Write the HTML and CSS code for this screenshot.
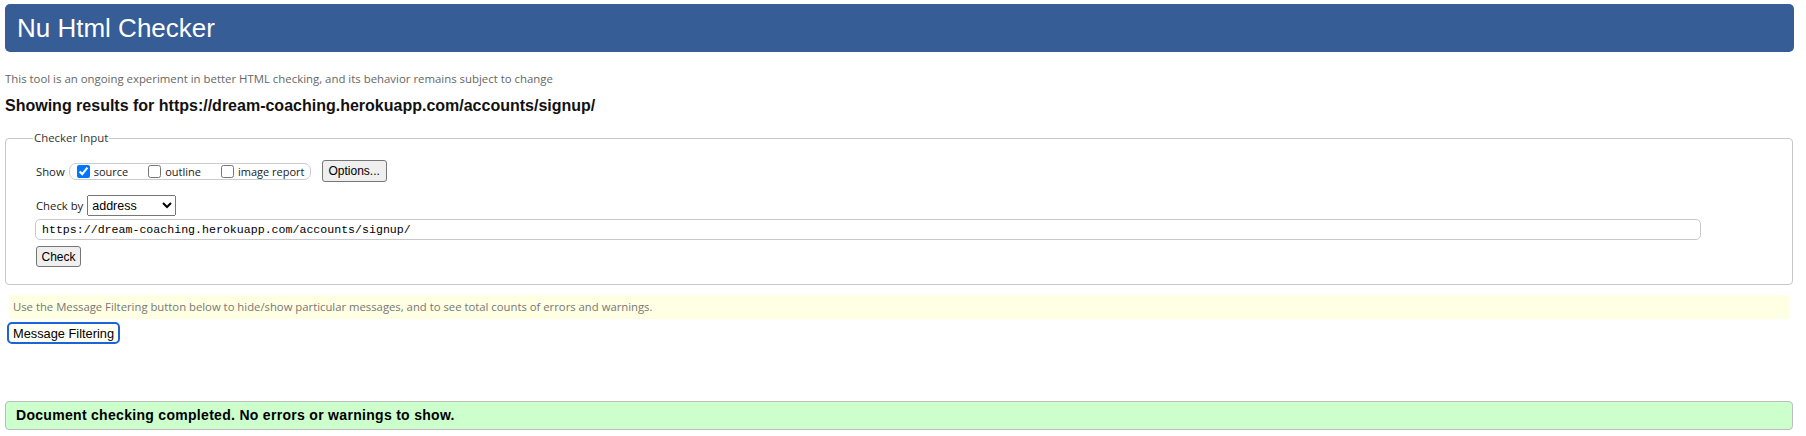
FILE: index.html
```html
<!DOCTYPE html>
<html lang="en">
<head>
<meta charset="utf-8">
<title>Showing results for https://dream-coaching.herokuapp.com/accounts/signup/ - Nu Html Checker</title>
<link rel="stylesheet" href="styles.css">
</head>
<body>
<h1 class="title">Nu Html Checker</h1>
<p class="about">This tool is an ongoing experiment in better HTML checking, and its behavior remains subject to change</p>
<h2 class="results-for">Showing results for https://dream-coaching.herokuapp.com/accounts/signup/</h2>
<form class="checker-form">
  <fieldset class="checker-input">
    <legend class="legend">Checker Input</legend>
    <div class="row show-row">
      <span class="label">Show</span>
      <span class="show-group">
        <label class="opt"><input type="checkbox" class="cb" checked>source</label>
        <label class="opt"><input type="checkbox" class="cb">outline</label>
        <label class="opt last"><input type="checkbox" class="cb">image report</label>
      </span>
      <button type="button" class="btn options">Options...</button>
    </div>
    <div class="row by-row">
      <span class="label">Check by</span>
      <select class="select"><option>address</option></select>
    </div>
    <div class="row url-row">
      <input class="url" type="text" value="https://dream-coaching.herokuapp.com/accounts/signup/">
    </div>
    <div class="row submit-row">
      <button type="button" class="btn check">Check</button>
    </div>
  </fieldset>
</form>
<p class="filter-note">Use the Message Filtering button below to hide/show particular messages, and to see total counts of errors and warnings.</p>
<button type="button" class="filter-btn">Message Filtering</button>
<p class="success">Document checking completed. No errors or warnings to show.</p>
</body>
</html>
```
FILE: styles.css
```css
html, body {
  background: #fff;
}
body {
  margin: 0;
  padding: 4px 12px 0 5px;
  font-family: "Open Sans", "Noto Sans", sans-serif;
  color: #222;
}
.title {
  margin: 0;
  height: 48px;
  line-height: 48px;
  padding: 0 12px;
  background: #365d95;
  color: #fff;
  border-radius: 5px;
  font-family: "Liberation Sans", Arial, sans-serif;
  font-weight: normal;
  font-size: 26px;
}
.about {
  margin: 20px 0 0;
  font-size: 11.4px;
  line-height: 14px;
  color: #666;
}
.results-for {
  margin: 11px 0 0;
  font-family: "Liberation Sans", Arial, sans-serif;
  font-weight: bold;
  font-size: 16px;
  line-height: 18px;
  color: #111;
}
.checker-form {
  margin: 15px 0 0;
}
.checker-input {
  margin: 0 1px 0 0;
  padding: 14px 0 17px 30px;
  border: 1px solid #c8c8c8;
  border-radius: 4px;
  min-width: 0;
}
.legend {
  margin-left: -3px;
  padding: 0 1px;
  font-size: 11.4px;
  line-height: 16px;
  color: #333;
}
.row {
  display: flex;
  align-items: center;
}
.show-row {
  height: 22px;
}
.by-row {
  margin-top: 13px;
  height: 21px;
}
.url-row {
  margin-top: 3px;
}
.submit-row {
  margin-top: 6px;
}
.label {
  font-size: 11.3px;
  color: #222;
  margin-right: 4px;
}
.show-group {
  display: flex;
  align-items: center;
  height: 15px;
  width: 233px;
  border: 1px solid #ccc;
  border-radius: 7px;
  padding: 0 0 0 7px;
  box-sizing: content-box;
}
.opt {
  display: flex;
  align-items: center;
  font-size: 11px;
  color: #222;
  margin-right: 20px;
}
.opt.last {
  margin-right: 0;
}
.cb {
  margin: 0 4px 0 0;
  width: 13px;
  height: 13px;
}
.btn {
  font-family: "Liberation Sans", Arial, sans-serif;
  font-size: 12px;
  color: #000;
  background: #efefef;
  border: 1px solid #767676;
  border-radius: 3px;
  padding: 0 5px;
}
.options {
  margin-left: 11px;
  height: 22px;
  width: 65px;
}
.check {
  height: 21px;
  width: 45px;
  padding: 0;
}
.select {
  font-family: "Liberation Sans", Arial, sans-serif;
  font-size: 12.5px;
  height: 21px;
  width: 89px;
  color: #000;
}
.url {
  box-sizing: border-box;
  width: 1666px;
  height: 21px;
  margin: 0 0 0 -1px;
  padding: 0 6px;
  border: 1px solid #c8c8c8;
  border-radius: 5px;
  font-family: "Liberation Mono", monospace;
  font-size: 11.6px;
  color: #000;
}
.filter-note {
  margin: 10px 4px 0;
  height: 24px;
  line-height: 24px;
  padding: 0 4px;
  background: #ffffe4;
  font-size: 11.3px;
  color: #777;
}
.filter-btn {
  display: block;
  margin: 3px 0 0 2px;
  height: 22px;
  width: 113px;
  padding: 0;
  border: 2px solid #1a63d8;
  border-radius: 5px;
  background: #fffff4;
  font-family: "Liberation Sans", Arial, sans-serif;
  font-size: 12.8px;
  color: #000;
}
.success {
  margin: 57px 1px 0 0;
  height: 27px;
  line-height: 27px;
  padding: 0 10px;
  background: #ccffcc;
  border: 1px solid #bdbdbd;
  border-radius: 4px;
  font-family: "Liberation Sans", Arial, sans-serif;
  font-weight: bold;
  font-size: 14px;
  letter-spacing: 0.3px;
  color: #000;
}
```
